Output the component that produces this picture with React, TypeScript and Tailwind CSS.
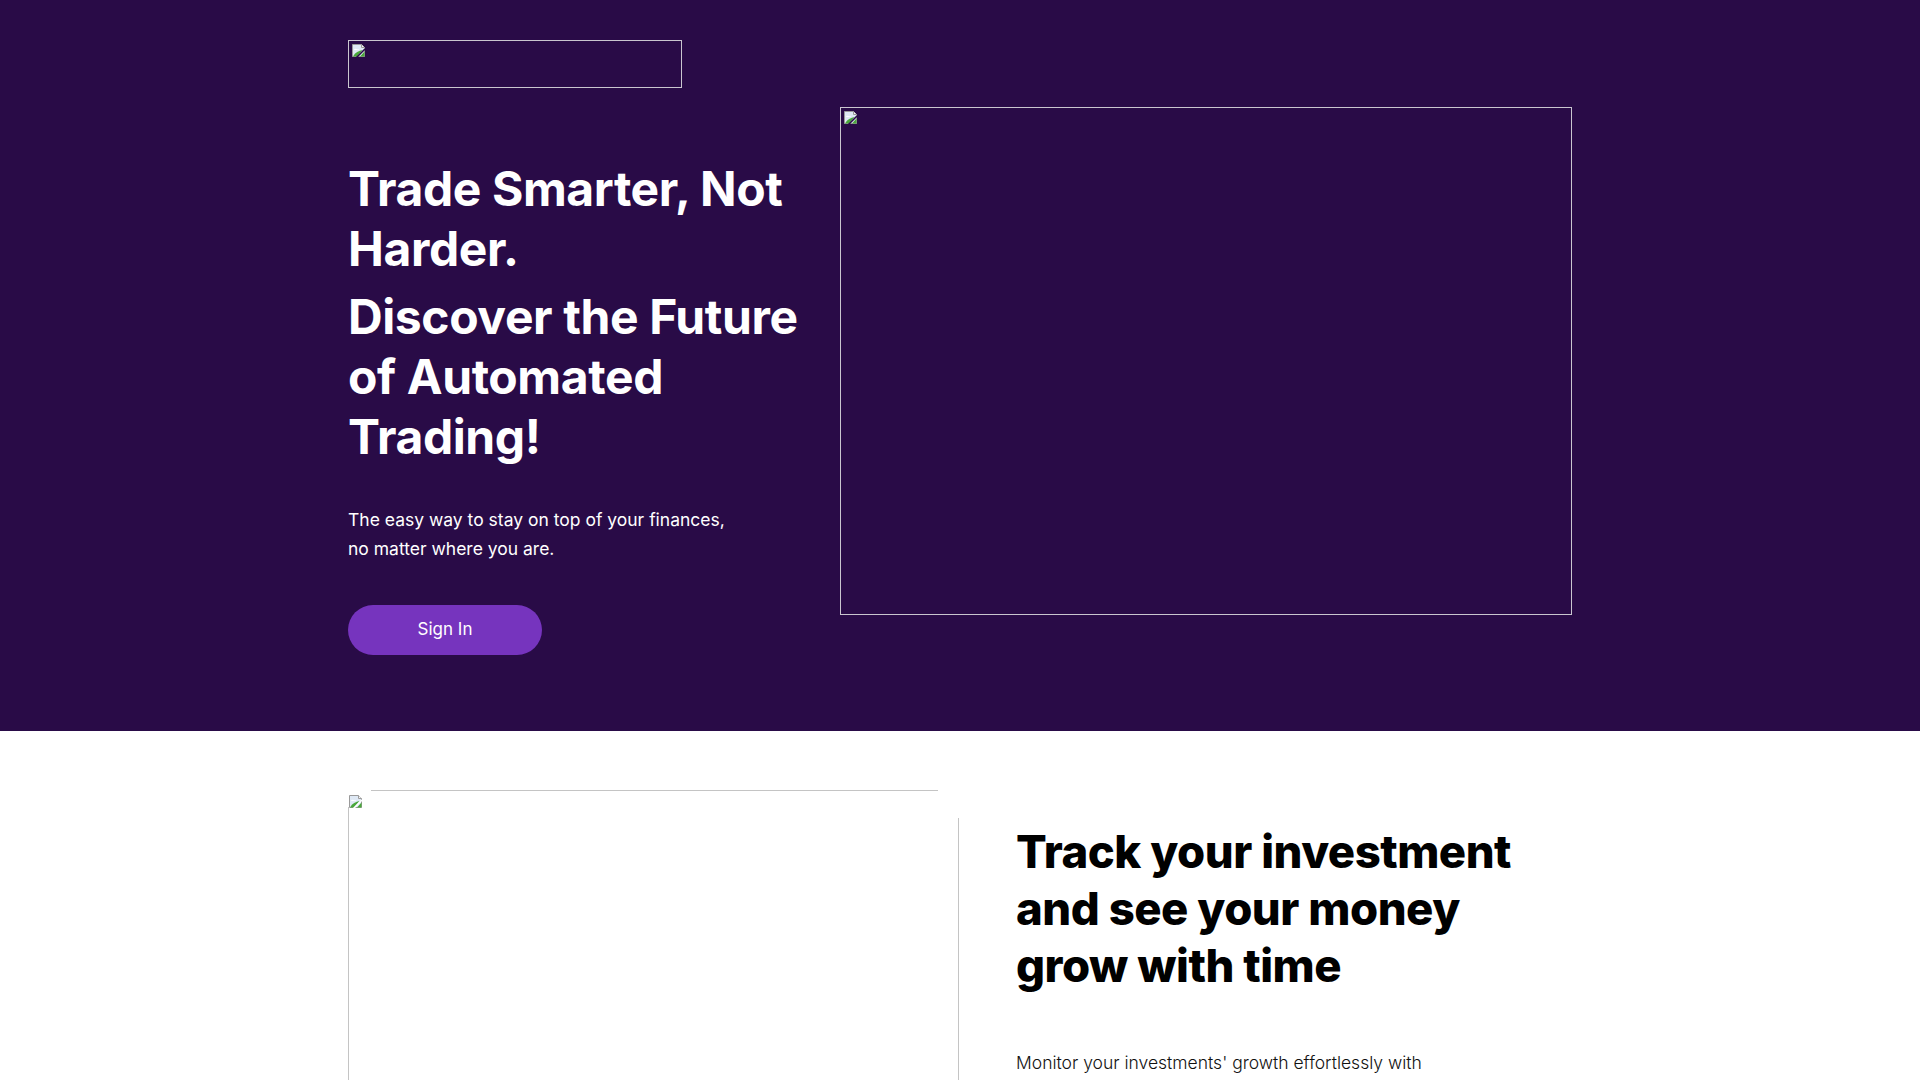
import React from "react";

// Small "missing picture" glyph drawn at the corner of an empty image frame
function BrokenPic({ cut = "#2a0b48" }: { cut?: string }) {
  return (
    <svg width="16" height="16" viewBox="0 0 16 16" className="block shrink-0">
      <path d="M1.5 1.5h9l3 3v9h-12z" fill="#dfe9f5" stroke="#9a9a9a" />
      <path d="M10.5 1.5v3h3" fill="#f4f4f4" stroke="#9a9a9a" />
      <path d="M3 6.5c1-1 2.5-1 3.2 0 .8-.6 1.8-.3 2 .5H3z" fill="#ffffff" />
      <path d="M2 13.5c2-4 6-6 9.5-6.5L6 13.5z" fill="#4aa83b" />
      <path d="M9 13.5l4.5-5v5z" fill="#4aa83b" />
      <path d="M5.5 14.5L14 6" stroke={cut} strokeWidth="1.6" />
    </svg>
  );
}

function EmptyFrame({ className }: { className: string }) {
  return (
    <div className={`border border-[#c9c6cf] p-[2px] ${className}`}>
      <BrokenPic />
    </div>
  );
}

export default function App() {
  const font = { fontFamily: "Inter, 'Noto Sans', sans-serif" };
  return (
    <div className="min-h-screen bg-white" style={font}>
      {/* Hero */}
      <section className="bg-[#290b47] text-white">
        <div className="mx-auto w-[1224px] pt-[40px] pb-[76px]">
          <EmptyFrame className="w-[334px] h-[48px]" />
          <div className="mt-[19px] flex items-start justify-between">
            <div className="w-[470px] pt-[52px]">
              <h1 className="text-[48px] leading-[60px] font-bold tracking-[-0.4px]">
                Trade Smarter, Not Harder.
              </h1>
              <h2 className="mt-[8px] text-[48px] leading-[60px] font-bold tracking-[-0.4px]">
                Discover the Future of Automated Trading!
              </h2>
              <p className="mt-[38px] text-[17.5px] leading-[29px] text-white">
                The easy way to stay on top of your finances,
                <br />
                no matter where you are.
              </p>
              <button className="mt-[42px] h-[50px] w-[194px] rounded-full bg-[#7634be] text-[17px] text-white">
                Sign In
              </button>
            </div>
            <EmptyFrame className="w-[732px] h-[508px]" />
          </div>
        </div>
      </section>

      {/* Tracking */}
      <section className="bg-white">
        <div className="mx-auto w-[1224px] pt-[59px] flex items-start">
          <div className="w-[611px]">
            <div className="flex items-start">
              <div className="pt-[4px]">
                <BrokenPic cut="#ffffff" />
              </div>
              <div className="ml-[7px] mr-[21px] h-px flex-1 bg-[#c4c4c4]" />
            </div>
            <div className="-mt-[3px] flex h-[420px] items-start justify-between">
              <div className="h-full w-px bg-[#c4c4c4]" />
              <div className="mt-[11px] h-full w-px bg-[#c4c4c4]" />
            </div>
          </div>
          <div className="ml-[57px] w-[540px] pt-[33px]">
            <h2 className="text-[45.5px] leading-[57px] font-extrabold tracking-[-0.5px] text-black">
              Track your investment
              <br />
              and see your money
              <br />
              grow with time
            </h2>
            <p className="mt-[54px] w-[420px] text-[17.5px] leading-[29px] font-light text-[#111]">
              Monitor your investments' growth effortlessly with our platform's
              intuitive tracking tools.
            </p>
          </div>
        </div>
      </section>
    </div>
  );
}
